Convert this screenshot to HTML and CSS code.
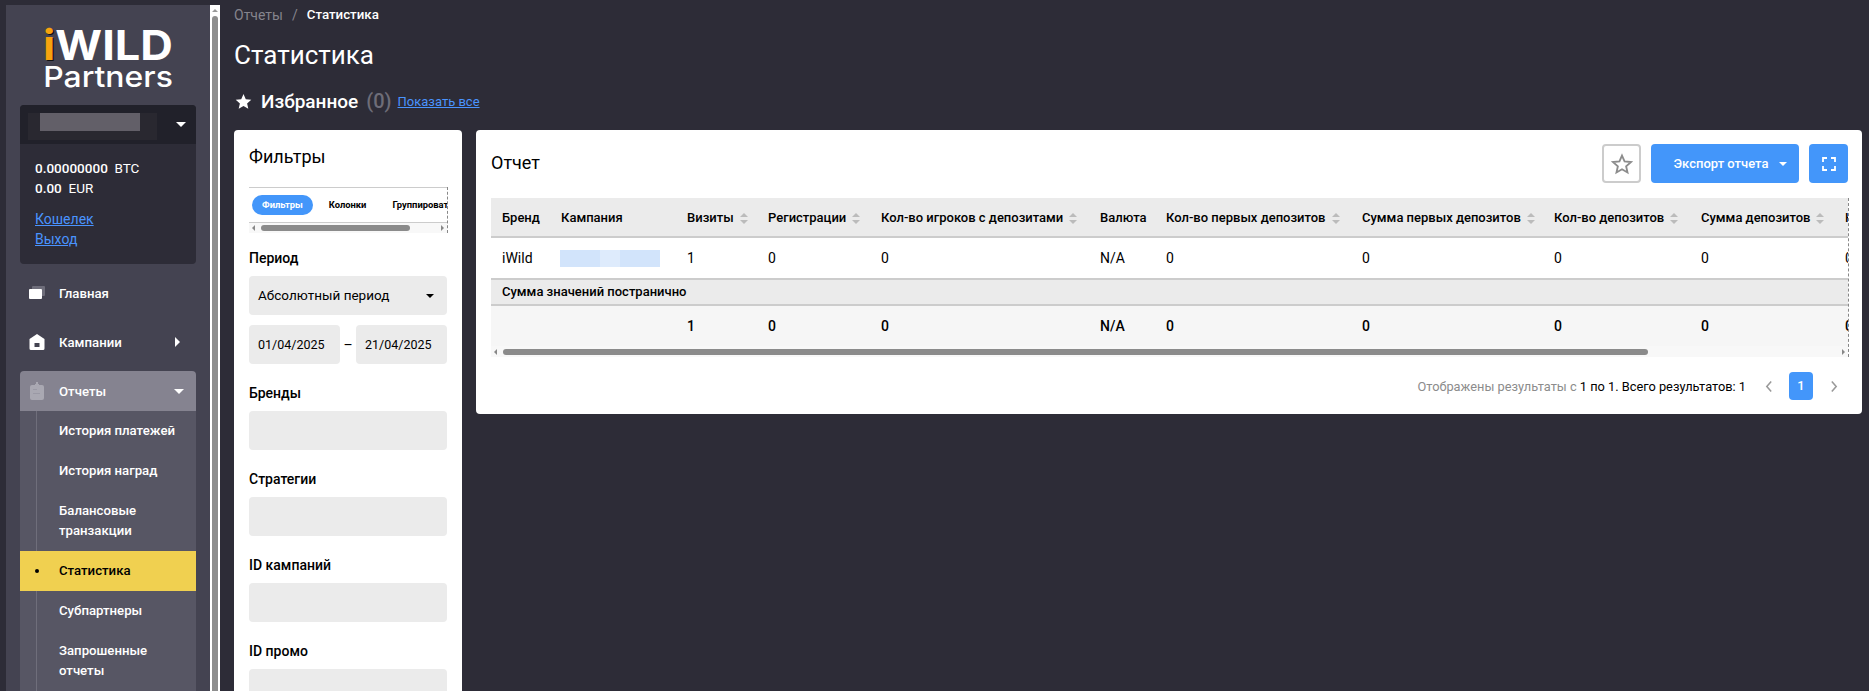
FILE: index.html
```html
<!DOCTYPE html>
<html lang="ru">
<head>
<meta charset="utf-8">
<title>Статистика</title>
<link rel="stylesheet" href="styles.css">
</head>
<body>
<div class="shell">
  <aside class="sidebar">
    <div class="logo">
      <div class="logo-top"><span class="logo-i">i</span>WILD</div>
      <div class="logo-bottom">Partners</div>
    </div>
    <div class="account">
      <div class="account-head">
        <div class="redact"><div class="redact-in"></div></div>
        <span class="caret-down"></span>
      </div>
      <div class="account-body">
        <div class="balance"><b>0.00000000</b>&nbsp; BTC</div>
        <div class="balance"><b>0.00</b>&nbsp; EUR</div>
        <div class="account-links">
          <a href="#">Кошелек</a>
          <a href="#">Выход</a>
        </div>
      </div>
    </div>
    <nav class="nav">
      <div class="nav-item">
        <svg class="nav-icon" viewBox="0 0 16 14"><rect x="3" y="0" width="13" height="10" rx="1" fill="#6e6d7a"/><rect x="0" y="3" width="13" height="10" rx="1" fill="#fff"/></svg>
        <span>Главная</span>
      </div>
      <div class="nav-item nav-camp">
        <svg class="nav-icon" viewBox="0 0 16 16"><path fill="#fff" fill-rule="evenodd" d="M8 0 L15.5 5 V14.5 a1.5 1.5 0 0 1 -1.5 1.5 H2 a1.5 1.5 0 0 1 -1.5 -1.5 V5 Z M5.5 9 V13 H10.5 V9 Z"/></svg>
        <span>Кампании</span>
        <span class="caret-right"></span>
      </div>
      <div class="nav-group">
        <div class="nav-head">
          <svg class="nav-icon clip" viewBox="0 0 14 18"><path fill="#a9a8b2" d="M5 2 h1 V0 h2 V2 h1 V3 h3 a2 2 0 0 1 2 2 V16 a2 2 0 0 1 -2 2 H2 a2 2 0 0 1 -2 -2 V5 a2 2 0 0 1 2 -2 h3 Z"/><rect x="3" y="7" width="4" height="1" fill="#9a99a5"/><rect x="3" y="11" width="7" height="1" fill="#9a99a5"/></svg>
          <span>Отчеты</span>
          <span class="caret-down"></span>
        </div>
        <div class="nav-subs">
          <div class="sub">История платежей</div>
          <div class="sub">История наград</div>
          <div class="sub">Балансовые транзакции</div>
          <div class="sub active">Статистика</div>
          <div class="sub">Субпартнеры</div>
          <div class="sub">Запрошенные отчеты</div>
        </div>
      </div>
    </nav>
  </aside>
  <div class="side-scroll">
    <span class="scroll-up"></span>
    <span class="scroll-thumb"></span>
  </div>
  <main class="main">
    <div class="crumbs"><span class="crumb-muted">Отчеты</span><span class="crumb-sep">/</span><b>Статистика</b></div>
    <h1 class="page-title">Статистика</h1>
    <div class="fav">
      <svg class="fav-star" viewBox="0 0 24 24"><path fill="#fff" d="M12 1.5l3.2 7.2 7.8.8-5.9 5.2 1.7 7.7L12 18.4l-6.8 4 1.7-7.7L1 9.5l7.8-.8z"/></svg>
      <span class="fav-title">Избранное</span>
      <span class="fav-count">(0)</span>
      <a href="#" class="fav-link">Показать все</a>
    </div>
    <div class="cards">
      <section class="card filters">
        <h2 class="filters-title">Фильтры</h2>
        <div class="tabs">
          <div class="tabs-row">
            <span class="tab on">Фильтры</span>
            <span class="tab">Колонки</span>
            <span class="tab">Группировать</span>
          </div>
          <div class="hbar hbar-small"><span class="arr-l"></span><span class="hthumb"></span><span class="arr-r"></span></div>
        </div>
        <div class="field first">
          <label>Период</label>
          <div class="input select">Абсолютный период<span class="caret-dark"></span></div>
          <div class="dates">
            <div class="input">01/04/2025</div>
            <span class="dash">–</span>
            <div class="input">21/04/2025</div>
          </div>
        </div>
        <div class="field"><label>Бренды</label><div class="input"></div></div>
        <div class="field"><label>Стратегии</label><div class="input"></div></div>
        <div class="field"><label>ID кампаний</label><div class="input"></div></div>
        <div class="field"><label>ID промо</label><div class="input"></div></div>
      </section>
      <section class="card report">
        <div class="report-head">
          <h2 class="report-title">Отчет</h2>
          <div class="actions">
            <button class="btn-star"><svg viewBox="0 0 24 24"><path fill="none" stroke="#8c8c8c" stroke-width="2" d="M12 2.8l2.8 6.4 6.9.7-5.2 4.6 1.5 6.8-6-3.5-6 3.5 1.5-6.8-5.2-4.6 6.9-.7z"/></svg></button>
            <button class="btn-export">Экспорт отчета<span class="caret-small"></span></button>
            <button class="btn-full"><svg viewBox="0 0 14 14"><path fill="none" stroke="#fff" stroke-width="1.8" d="M1 5V1h4M9 1h4v4M13 9v4H9M5 13H1V9"/></svg></button>
          </div>
        </div>
        <div class="table-wrap">
          <table class="tbl">
            <colgroup>
              <col class="c1"><col class="c2"><col class="c3"><col class="c4"><col class="c5"><col class="c6"><col class="c7"><col class="c8"><col class="c9"><col class="c10"><col class="c11">
            </colgroup>
            <thead>
              <tr>
                <th>Бренд</th>
                <th>Кампания</th>
                <th>Визиты<i class="sort"></i></th>
                <th>Регистрации<i class="sort"></i></th>
                <th>Кол-во игроков с депозитами<i class="sort"></i></th>
                <th>Валюта</th>
                <th>Кол-во первых депозитов<i class="sort"></i></th>
                <th>Сумма первых депозитов<i class="sort"></i></th>
                <th>Кол-во депозитов<i class="sort"></i></th>
                <th>Сумма депозитов<i class="sort"></i></th>
                <th>Кол-во</th>
              </tr>
            </thead>
            <tbody>
              <tr class="row">
                <td>iWild</td>
                <td><div class="redact-blue"></div></td>
                <td>1</td><td>0</td><td>0</td><td>N/A</td><td>0</td><td>0</td><td>0</td><td>0</td><td>0</td>
              </tr>
              <tr class="sum-title"><td colspan="11">Сумма значений постранично</td></tr>
              <tr class="sum">
                <td></td><td></td>
                <td>1</td><td>0</td><td>0</td><td>N/A</td><td>0</td><td>0</td><td>0</td><td>0</td><td>0</td>
              </tr>
            </tbody>
          </table>
          <div class="hbar hbar-table"><span class="arr-l"></span><span class="hthumb"></span><span class="arr-r"></span></div>
        </div>
        <div class="pager">
          <span class="pager-text"><span class="muted">Отображены результаты с </span>1 по 1. Всего результатов: 1</span>
          <svg class="pg-arrow" viewBox="0 0 7 10"><path fill="none" stroke="#999" stroke-width="1.4" d="M5.5 .5 1.5 5l4 4.5"/></svg>
          <span class="pg-num">1</span>
          <svg class="pg-arrow" viewBox="0 0 7 10"><path fill="none" stroke="#999" stroke-width="1.4" d="M1.5 .5 5.5 5l-4 4.5"/></svg>
        </div>
      </section>
    </div>
  </main>
</div>
</body>
</html>
```
FILE: styles.css
```css
* { box-sizing: border-box; }
html, body { margin: 0; height: 691px; overflow: hidden; }
body { background: #2d2c37; font-family: Roboto, "Noto Sans", sans-serif; font-size: 14px; color: #000; }
.shell { display: flex; height: 691px; overflow: hidden; }

/* sidebar */
.sidebar { width: 204px; margin: 5px 0 0 6px; background: #444351; padding: 0 14px; flex: none; height: 760px; }
.logo { height: 100px; padding-top: 22px; color: #fff; text-align: center; font-family: Inter, sans-serif; font-weight: 600; line-height: 1; }
.logo-top { font-size: 41px; line-height: 36px; font-weight: 700; transform: scaleX(1.1); }
.logo-i { color: #f7a30e; text-shadow: 1px 1px 0 #111; }
.logo-bottom { font-size: 29px; line-height: 28px; font-weight: 500; transform: scaleX(1.1); }
.account { background: #2d2c37; border-radius: 4px; height: 159px; overflow: hidden; }
.account-head { height: 39px; background: #21212a; display: flex; align-items: flex-start; justify-content: space-between; padding: 8px 10px 0 8px; }
.redact { width: 129px; height: 27px; background: #292830; }
.redact-in { width: 100px; height: 18px; margin-left: 12px; background: #625f68; }
.account-head .caret-down { margin-top: 9px; }
.caret-down { width: 0; height: 0; border-left: 5px solid transparent; border-right: 5px solid transparent; border-top: 5px solid #fff; }
.account-body { padding: 14px 15px; color: #fff; }
.balance { line-height: 20px; font-size: 13.5px; }
.balance b { font-weight: 500; }
.account-links { margin-top: 11px; }
.account-links a { display: block; color: #4a94ff; line-height: 20px; font-size: 14px; }
.nav { margin-top: 9px; color: #fff; font-size: 13.2px; font-weight: 500; }
.nav-item { height: 40px; margin-bottom: 9px; display: flex; align-items: center; padding: 0 16px 0 9px; }
.nav-icon { width: 16px; height: 16px; margin-right: 14px; flex: none; }
.nav-item span:first-of-type, .nav-head span:first-of-type { flex: 1; }
.caret-right { width: 0; height: 0; flex: none !important; border-top: 5px solid transparent; border-bottom: 5px solid transparent; border-left: 5px solid #fff; }
.nav-group { border-radius: 4px 4px 0 0; }
.nav-head { height: 40px; background: #858390; border-radius: 4px 4px 0 0; display: flex; align-items: center; padding: 0 12px 0 10px; }
.nav-icon.clip { width: 14px; height: 18px; margin-right: 15px; }
.nav-subs { background: #575664; position: relative; }
.nav-subs::before { content: ""; position: absolute; left: 16px; top: 0; bottom: 0; width: 1px; background: #6f6e7b; }
.sub { padding: 10px 10px 10px 39px; line-height: 20px; position: relative; }
.sub.active { background: #f0d050; color: #000; }
.sub.active::before { content: ""; position: absolute; left: 15px; top: 18px; width: 4px; height: 4px; border-radius: 50%; background: #000; }
.side-scroll { width: 10px; margin-top: 5px; background: #fff; position: relative; flex: none; }
.scroll-up { position: absolute; top: 4px; left: 2px; border-left: 3px solid transparent; border-right: 3px solid transparent; border-bottom: 3px solid #999; }
.scroll-thumb { position: absolute; top: 11px; left: 2px; width: 6px; bottom: 0; background: #8e8e8e; border-radius: 3px 3px 0 0; }

/* main */
.main { flex: 1; min-width: 0; padding: 0 7px 0 14px; }
.crumbs { height: 28px; line-height: 30px; color: #fff; font-size: 14px; display: flex; }
.crumbs b { font-weight: 500; font-size: 13.3px; }
.crumb-muted { color: #85848d; }
.crumb-sep { color: #85848d; margin: 0 9px; }
.page-title { margin: 0; height: 54px; line-height: 54px; font-size: 26px; font-weight: 400; color: #fff; }
.fav { height: 38px; display: flex; align-items: center; color: #fff; }
.fav-star { width: 17px; height: 17px; margin-right: 9px; margin-left: 1px; }
.fav-title { font-size: 19px; font-weight: 500; }
.fav-count { font-size: 20px; font-weight: 500; color: #6e6d78; margin: 0 6px 0 8px; }
.fav-link { color: #4a94ff; font-size: 13px; }
.cards { display: flex; gap: 14px; margin-top: 10px; align-items: flex-start; }
.card { background: #fff; border-radius: 4px; }
.filters { width: 228px; flex: none; padding: 0 15px; height: 620px; }
.filters-title { margin: 0; height: 57px; padding-top: 13px; font-size: 18px; line-height: 28px; font-weight: 400; }
.tabs { width: 199px; border-right: 1px dashed #888; overflow: hidden; }
.tabs-row { height: 36px; border-top: 1px solid #ccc; border-bottom: 1px solid #ccc; display: flex; align-items: center; padding-left: 3px; white-space: nowrap; overflow: hidden; font-size: 9.4px; font-weight: 700; }
.tab { padding: 0 10px; margin-right: 6px; line-height: 20px; border-radius: 10px; }
.tab.on { background: #4396fa; color: #fff; }
.hbar { position: relative; background: #f8f8f8; }
.hbar-small { height: 10px; }
.hbar .hthumb { position: absolute; top: 2px; height: 6px; background: #8b8b8b; border-radius: 3px; }
.hbar-small .hthumb { left: 12px; width: 149px; }
.arr-l, .arr-r { position: absolute; top: 2px; width: 0; height: 0; border-top: 3px solid transparent; border-bottom: 3px solid transparent; }
.arr-l { left: 3px; border-right: 3px solid #888; }
.arr-r { right: 3px; border-left: 3px solid #888; }
.field { margin-top: 19px; }
.field.first { margin-top: 15px; }
.field label { display: block; font-weight: 500; font-size: 14px; line-height: 20px; margin-bottom: 8px; }
.input { height: 39px; background: #ebebeb; border-radius: 4px; line-height: 39px; padding: 0 9px; font-size: 13.5px; }
.select { display: flex; align-items: center; justify-content: space-between; }
.caret-dark { width: 0; height: 0; border-left: 4px solid transparent; border-right: 4px solid transparent; border-top: 4px solid #000; margin-right: 4px; }
.dates { display: flex; justify-content: space-between; align-items: center; margin-top: 10px; }
.dates .input { width: 91px; font-size: 12.5px; }
.dash { width: 16px; text-align: center; }

.report { flex: 1; min-width: 0; height: 284px; padding: 14px 14px 0 15px; }
.report-head { display: flex; justify-content: space-between; height: 54px; }
.report-title { margin: 0; font-size: 18px; line-height: 38px; font-weight: 400; }
.actions { display: flex; gap: 10px; height: 39px; }
.actions button { border: 0; border-radius: 4px; padding: 0; color: #fff; font: inherit; font-size: 13px; font-weight: 500; display: flex; align-items: center; justify-content: center; }
.btn-star { width: 39px; background: #fff !important; border: 2px solid #ccc !important; }
.btn-star svg { width: 22px; height: 22px; }
.actions .btn-export { width: 148px; background: #4396fa; padding-left: 11px; }
.caret-small { margin-left: 11px; border-left: 4px solid transparent; border-right: 4px solid transparent; border-top: 4px solid #fff; }
.btn-full { width: 39px; background: #4396fa; }
.btn-full svg { width: 14px; height: 14px; }
.table-wrap { width: 1358px; border-right: 1px dashed #888; overflow: hidden; position: relative; }
.tbl { width: 1500px; table-layout: fixed; border-collapse: separate; border-spacing: 0; font-size: 13px; }
.c1 { width: 59px; } .c2 { width: 126px; } .c3 { width: 81px; } .c4 { width: 113px; } .c5 { width: 219px; } .c6 { width: 66px; }
.c7 { width: 196px; } .c8 { width: 192px; } .c9 { width: 147px; } .c10 { width: 144px; } .c11 { width: 157px; }
.tbl th { height: 40px; padding: 0 0 0 11px; background: #ebebeb; border-bottom: 2px solid #ccc; text-align: left; font-weight: 500; white-space: nowrap; }
.tbl td { padding: 0 0 0 11px; white-space: nowrap; }
.row td { height: 42px; border-bottom: 2px solid #ccc; font-size: 14px; }
.sum-title td { height: 26px; padding-bottom: 1px; background: #ebebeb; border-bottom: 2px solid #ccc; font-weight: 500; }
.sum td { height: 40px; padding-bottom: 1px; background: #f6f6f6; font-weight: 500; font-size: 14px; }
.sort { display: inline-block; vertical-align: middle; margin-left: 6px; width: 8px; height: 11px; position: relative; }
.sort::before, .sort::after { content: ""; position: absolute; left: 0; border-left: 4px solid transparent; border-right: 4px solid transparent; }
.sort::before { top: 0; border-bottom: 4px solid #bbb; }
.sort::after { bottom: 0; border-top: 4px solid #bbb; }
.redact-blue { width: 100px; height: 17px; background: linear-gradient(90deg, #d2e4fb 40%, #deebfc 40%, #deebfc 60%, #d2e4fb 60%); margin-left: -1px; }
.hbar-table { height: 11px; }
.hbar-table .hthumb { left: 12px; width: 1145px; top: 3px; }
.hbar-table .arr-l, .hbar-table .arr-r { top: 3px; }
.pager { display: flex; justify-content: flex-end; align-items: center; height: 28px; margin-top: 15px; padding-right: 10px; font-size: 12.8px; }
.muted { color: #8c8c8c; }
.pager-text { margin-right: 19px; }
.pg-arrow { width: 8px; height: 11px; }
.pg-num { width: 24px; height: 28px; margin: 0 17px 0 16px; background: #4396fa; color: #fff; border-radius: 4px; text-align: center; line-height: 28px; font-weight: 500; }
```
